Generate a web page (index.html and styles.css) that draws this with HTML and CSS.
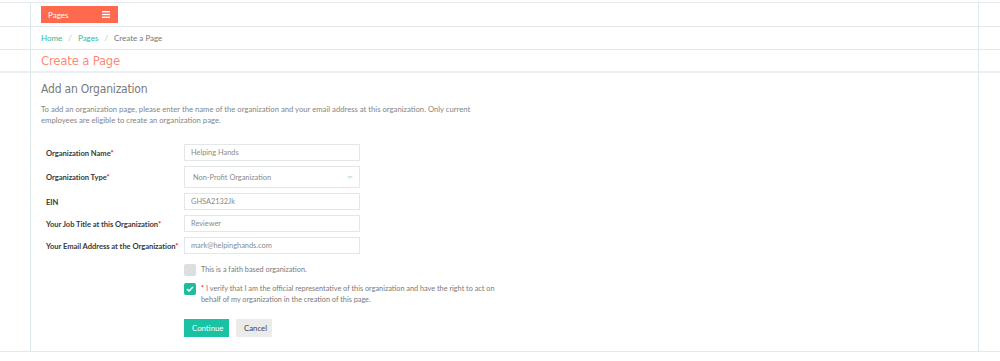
FILE: index.html
```html
<!DOCTYPE html>
<html>
<head>
<meta charset="utf-8">
<link rel="stylesheet" href="styles.css">
</head>
<body>
<div class="page">
  <div class="row row-top">
    <div class="col">
      <div class="menu-bar">
        <span class="menu-label">Pages</span>
        <svg class="burger" width="8" height="7" viewBox="0 0 8 7"><rect x="0" y="0" width="8" height="1.4" fill="#fff"/><rect x="0" y="2.8" width="8" height="1.4" fill="#fff"/><rect x="0" y="5.6" width="8" height="1.4" fill="#fff"/></svg>
      </div>
    </div>
  </div>
  <div class="row row-crumb">
    <div class="col">
      <nav class="crumbs"><a class="crumb-link">Home</a><span class="sep">/</span><a class="crumb-link">Pages</a><span class="sep">/</span><span class="crumb-cur">Create a Page</span></nav>
    </div>
  </div>
  <div class="row row-title">
    <div class="col">
      <h1 class="page-title">Create a Page</h1>
    </div>
  </div>
  <div class="row row-main">
    <div class="col col-main">
      <h2 class="section-title">Add an Organization</h2>
      <p class="intro">To add an organization page, please enter the name of the organization and your email address at this organization. Only current employees are eligible to create an organization page.</p>
      <form class="org-form">
        <label class="lbl">Organization Name<span class="req">*</span></label>
        <div class="field">Helping Hands</div>
        <label class="lbl">Organization Type<span class="req">*</span></label>
        <div class="field select">Non-Profit Organization<span class="caret"></span></div>
        <label class="lbl">EIN</label>
        <div class="field">GHSA2132Jk</div>
        <label class="lbl">Your Job Title at this Organization<span class="req">*</span></label>
        <div class="field">Reviewer</div>
        <label class="lbl">Your Email Address at the Organization<span class="req">*</span></label>
        <div class="field">mark@helpinghands.com</div>
      </form>
      <div class="checks">
        <div class="check-row first">
          <span class="box"></span>
          <span class="check-text">This is a faith based organization.</span>
        </div>
        <div class="check-row">
          <span class="box on"><svg width="8" height="6" viewBox="0 0 8 6"><path d="M1 3 L3 5 L7 1" fill="none" stroke="#fff" stroke-width="1.5"/></svg></span>
          <span class="check-text"><span class="req">* </span>I verify that I am the official representative of this organization and have the right to act on behalf of my organization in the creation of this page.</span>
        </div>
      </div>
      <div class="actions">
        <button class="btn btn-primary" type="button">Continue</button>
        <button class="btn btn-default" type="button">Cancel</button>
      </div>
    </div>
  </div>
</div>
</body>
</html>
```

FILE: styles.css
```css
html, body { margin: 0; padding: 0; background: #fff; }
body {
  font-family: "Source Sans Pro", Lato, "Noto Sans", sans-serif;
  color: #555;
  padding-top: 2px;
}
.page { border-top: 1px solid #e6eaec; }
.row { border-bottom: 1px solid #e2eaee; }
.col {
  margin: 0 21px 0 30px;
  border-left: 1px solid #dde9ec;
  border-right: 1px solid #dde9ec;
  padding-left: 10px;
  box-sizing: border-box;
}
.row-top .col { height: 23px; padding-top: 3px; box-sizing: border-box; }
.menu-bar {
  width: 77px; height: 17px; background: #ff6a4f;
  display: flex; align-items: center; justify-content: space-between;
  padding: 0 8px 0 7px; box-sizing: border-box;
}
.menu-label { color: #fff; font-size: 8px; }
.burger { display: block; }
.row-crumb .col { height: 22px; display: flex; align-items: center; }
.crumbs { font-size: 8px; color: #777; display: flex; align-items: center; }
.crumb-link { color: #2fb8a0; }
.sep { color: #bbb; margin: 0 6px; }
.crumb-cur { color: #777; }
.row-title { border-bottom: 2px solid #eceff1; }
.row-title .col { height: 21px; display: flex; align-items: center; }
.page-title {
  margin: 0; font-weight: normal; font-size: 13px; color: #ff8a73;
  font-family: "DejaVu Sans Condensed", "Liberation Sans Narrow", sans-serif;
  letter-spacing: -0.2px;
}
.col-main { padding-top: 8px; height: 278px; }
.section-title {
  margin: 0; font-weight: normal; font-size: 12px; color: #7a7a7a;
  font-family: "DejaVu Sans Condensed", "Liberation Sans Narrow", sans-serif;
  letter-spacing: -0.2px;
  height: 16px; line-height: 16px;
}
.intro {
  margin: 7px 0 0 0; width: 440px;
  font-size: 7.7px; line-height: 11px; color: #858585;
}
.org-form {
  margin: 18px 0 0 5px;
  display: grid; grid-template-columns: 138px 176px;
  row-gap: 5px; align-items: center;
}
.lbl { font-size: 7.6px; font-weight: 700; color: #3a3a3a; white-space: nowrap; letter-spacing: -0.05px; }
.req { color: #e02020; }
.field {
  height: 17px; box-sizing: border-box;
  border: 1px solid #e3e7e8; background: #fff;
  font-size: 7.4px; color: #8a8a8a;
  padding-left: 6px; display: flex; align-items: center;
}
.field.select { height: 22px; padding-left: 8px; position: relative; }
.caret {
  position: absolute; right: 6px; top: 9px;
  width: 0; height: 0;
  border-left: 3px solid transparent; border-right: 3px solid transparent;
  border-top: 3px solid #cfe6e1;
}
.checks { margin: 10px 0 0 143px; }
.check-row { display: flex; align-items: flex-start; margin-top: 7px; }
.check-row.first { margin-top: 0; align-items: center; }
.box {
  width: 12px; height: 12px; border-radius: 2px; background: #dcdfe1;
  flex: none; display: flex; align-items: center; justify-content: center;
  margin-right: 5px;
}
.box.on { background: #1cbc9c; }
.box svg { display: block; }
.check-text { font-size: 7.3px; line-height: 11px; color: #7a7a7a; width: 300px; }
.check-row.first .check-text { line-height: 12px; }
.actions { margin: 14px 0 0 143px; display: flex; gap: 7px; }
.btn {
  height: 18px; border: 0; border-radius: 0; padding: 0 8px;
  font-family: inherit; font-size: 7.8px; cursor: pointer;
}
.btn-primary { background: #19c2a2; color: #fff; width: 45px; }
.btn-default { background: #ebebeb; color: #444; width: 36px; }
```
